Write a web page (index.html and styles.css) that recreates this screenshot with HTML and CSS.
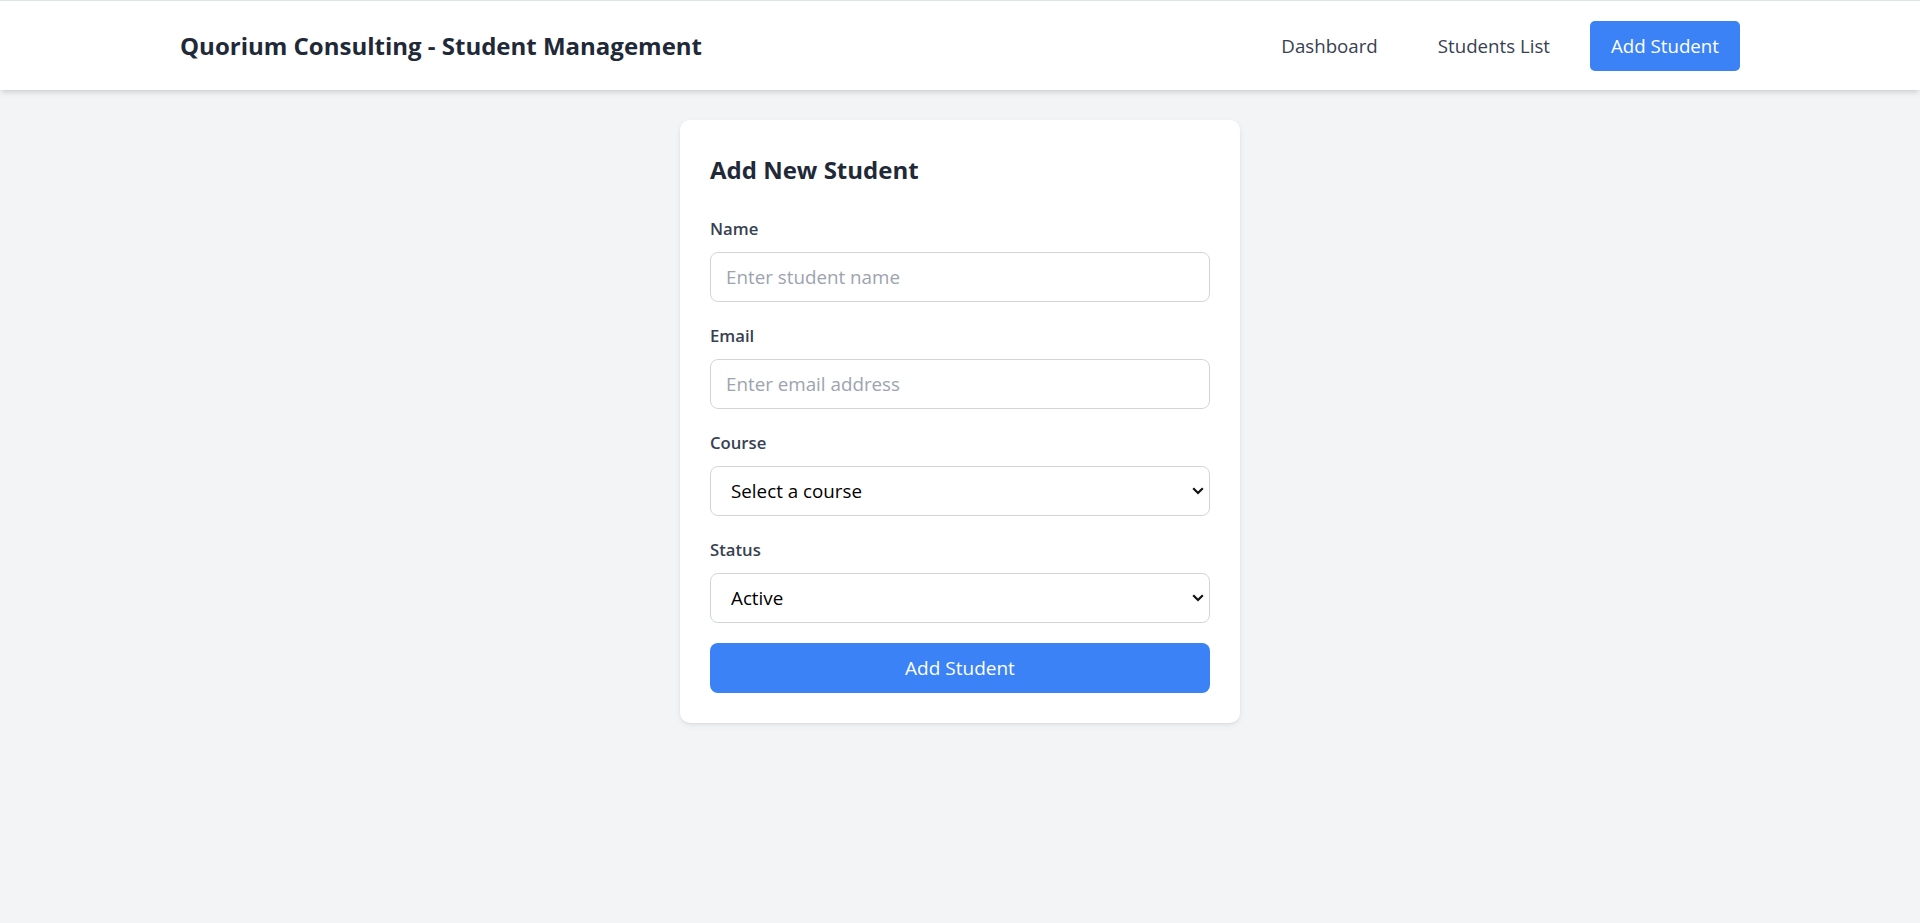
FILE: index.html
```html
<!DOCTYPE html>
<html lang="en">
<head>
<meta charset="utf-8">
<title>Quorium Consulting - Student Management</title>
<link rel="stylesheet" href="styles.css">
</head>
<body>
<header class="topbar">
  <h1 class="brand">Quorium Consulting - Student Management</h1>
  <nav class="nav">
    <a class="nav-link" href="#">Dashboard</a>
    <a class="nav-link" href="#">Students List</a>
    <a class="nav-link nav-link-active" href="#">Add Student</a>
  </nav>
</header>
<main class="main">
  <section class="card">
    <h2 class="card-title">Add New Student</h2>
    <form class="form">
      <div class="field">
        <label class="label" for="name">Name</label>
        <input class="control" id="name" type="text" placeholder="Enter student name">
      </div>
      <div class="field">
        <label class="label" for="email">Email</label>
        <input class="control" id="email" type="email" placeholder="Enter email address">
      </div>
      <div class="field">
        <label class="label" for="course">Course</label>
        <div class="select-wrap">
          <select class="control select" id="course">
            <option>Select a course</option>
          </select>
          <svg class="chevron" width="12" height="8" viewBox="0 0 12 8"><path d="M1.2 1.3 L6 6 L10.8 1.3" fill="none" stroke="#111" stroke-width="2.2"/></svg>
        </div>
      </div>
      <div class="field field-last">
        <label class="label" for="status">Status</label>
        <div class="select-wrap">
          <select class="control select" id="status">
            <option>Active</option>
          </select>
          <svg class="chevron" width="12" height="8" viewBox="0 0 12 8"><path d="M1.2 1.3 L6 6 L10.8 1.3" fill="none" stroke="#111" stroke-width="2.2"/></svg>
        </div>
      </div>
      <button class="submit" type="button">Add Student</button>
    </form>
  </section>
</main>
</body>
</html>
```
FILE: styles.css
```css
* { box-sizing: border-box; }
html, body { margin: 0; padding: 0; }
body {
  background: #f3f4f6;
  font-family: "Open Sans", "Noto Sans", sans-serif;
  color: #1f2937;
  min-height: 923px;
}
.topbar {
  height: 90px;
  background: #fff;
  border-top: 1px solid #dfe5e3;
  box-shadow: 0 4px 6px -1px rgba(0,0,0,0.1), 0 2px 4px -2px rgba(0,0,0,0.1);
  display: flex;
  align-items: center;
  justify-content: space-between;
  padding: 0 180px;
  position: relative;
}
.brand {
  margin: 0;
  font-size: 24px;
  line-height: 34px;
  font-weight: 700;
  color: #1f2937;
}
.nav { display: flex; gap: 20px; align-items: center; }
.nav-link {
  display: block;
  padding: 12px 20px;
  font-size: 18.7px;
  line-height: 26px;
  color: #374151;
  text-decoration: none;
  border-radius: 5px;
}
.nav-link-active { background: #3b82f6; color: #fff; padding: 12px 21px; }
.main { padding-top: 30px; display: flex; justify-content: center; }
.card {
  width: 560px;
  background: #fff;
  border-radius: 10px;
  padding: 30px;
  box-shadow: 0 2px 6px -1px rgba(0,0,0,0.1), 0 1px 3px -1px rgba(0,0,0,0.08);
}
.card-title {
  margin: 0 0 26px;
  font-size: 24px;
  line-height: 40px;
  font-weight: 700;
  color: #1f2937;
}
.form { display: flex; flex-direction: column; }
.field { display: flex; flex-direction: column; margin-bottom: 21px; }
.field-last { margin-bottom: 20px; }
.label {
  font-size: 16.7px;
  line-height: 26px;
  font-weight: 600;
  color: #374151;
  margin-bottom: 10px;
}
.control {
  height: 50px;
  width: 100%;
  border: 1px solid #d1d5db;
  border-radius: 8px;
  background: #fff;
  padding: 0 15px;
  font-family: inherit;
  font-size: 18.8px;
  color: #000;
  outline: none;
}
.control::placeholder { color: #9ca3af; }
.select-wrap { position: relative; }
.select {
  appearance: none;
  -webkit-appearance: none;
  padding-left: 20px;
}
.chevron { position: absolute; right: 6px; top: 21px; pointer-events: none; }
.submit {
  height: 50px;
  border: none;
  border-radius: 8px;
  background: #3b82f6;
  color: #fff;
  font-family: inherit;
  font-size: 19px;
  cursor: pointer;
}
```
